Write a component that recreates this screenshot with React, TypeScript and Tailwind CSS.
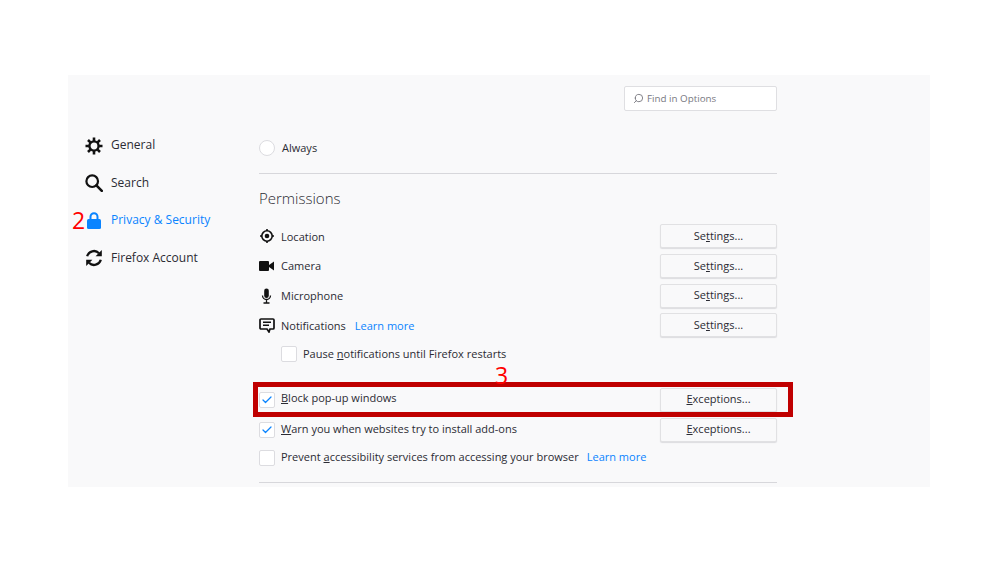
import { Check, Search } from "lucide-react";
import { ReactNode } from "react";

const font = { fontFamily: '"Open Sans", "Noto Sans", sans-serif' };

const NavItem = ({ icon, label, active }: { icon: ReactNode; label: string; active?: boolean }) => (
  <div className={`flex h-[37.5px] items-center gap-[8px] pl-[17px] text-[12px] ${active ? "text-[#0a84ff]" : "text-[#2b2b33]"}`}>
    <span className="flex w-[18px] justify-center">{icon}</span>
    <span className="mb-[1px]">{label}</span>
  </div>
);

const Btn = ({ children }: { children: ReactNode }) => (
  <button className="h-[24px] w-[117px] rounded-[2px] border border-[#e1e1e3] bg-[#f9f9fa] text-center text-[11px] text-[#2b2b33] shadow-[0_1px_1px_#dcdcdf]">
    {children}
  </button>
);

const Settings2 = () => (
  <Btn>
    Se<span className="underline">t</span>tings...
  </Btn>
);

const Exceptions = () => (
  <Btn>
    <span className="underline">E</span>xceptions...
  </Btn>
);

const CheckBox = ({ checked }: { checked?: boolean }) => (
  <span className="flex h-[16px] w-[16px] shrink-0 items-center justify-center rounded-[2px] border border-[#dcdce0] bg-white">
    {checked && <Check size={12} strokeWidth={2.5} className="text-[#0a84ff]" />}
  </span>
);

const PermRow = ({ icon, label, extra }: { icon: ReactNode; label: string; extra?: ReactNode }) => (
  <div className="flex h-[29.67px] items-center justify-between">
    <div className="flex items-center">
      <span className="flex w-[22px] justify-start">{icon}</span>
      <span className="mt-[1px] text-[11px] text-[#2b2b33]">{label}</span>
      {extra}
    </div>
    <Settings2 />
  </div>
);

const GearIcon = () => (
  <svg width="18" height="18" viewBox="0 0 18 18">
    <circle cx="9" cy="9" r="4.6" fill="none" stroke="#111" strokeWidth="2.4" />
    <path
      d="M9 .5v3.4M9 14.1v3.4M.5 9h3.4M14.1 9h3.4M3 3l2.4 2.4M12.6 12.6 15 15M15 3l-2.4 2.4M5.4 12.6 3 15"
      stroke="#111"
      strokeWidth="2.6"
    />
  </svg>
);

const SearchIcon = () => (
  <svg width="18" height="18" viewBox="0 0 18 18">
    <circle cx="7.2" cy="7.2" r="5.8" fill="none" stroke="#111" strokeWidth="2.2" />
    <path d="M11.4 11.4 16.8 16.8" stroke="#111" strokeWidth="2.6" strokeLinecap="round" />
  </svg>
);

const SyncIcon = () => (
  <svg width="18" height="18" viewBox="0 0 18 18">
    <path d="M2.2 7.2A7 7 0 0 1 14 4.2" fill="none" stroke="#111" strokeWidth="2.3" />
    <path d="M16.8 1v6.2h-6.2z" fill="#111" />
    <path d="M15.8 10.8A7 7 0 0 1 4 13.8" fill="none" stroke="#111" strokeWidth="2.3" />
    <path d="M1.2 17v-6.2h6.2z" fill="#111" />
  </svg>
);

const LocationIcon = () => (
  <svg width="16" height="16" viewBox="0 0 16 16">
    <circle cx="8" cy="8" r="5.2" fill="none" stroke="#111" strokeWidth="1.6" />
    <circle cx="8" cy="8" r="2.3" fill="#111" />
    <path d="M8 1v2M8 13v2M1 8h2M13 8h2" stroke="#111" strokeWidth="1.6" />
  </svg>
);

const VideoIcon = () => (
  <svg width="15" height="16" viewBox="0 0 15 16">
    <rect x="0" y="3" width="10" height="10" rx="1" fill="#111" />
    <path d="M10 7l5-3.5v9L10 9z" fill="#111" />
  </svg>
);

const MicIcon = () => (
  <svg width="15" height="16" viewBox="0 0 15 16">
    <rect x="5.2" y="0.5" width="4.6" height="9.5" rx="2.3" fill="#111" />
    <path d="M3.5 7.5a4 4 0 0 0 8 0M7.5 11.5v3M4.5 15h6" fill="none" stroke="#111" strokeWidth="1.3" />
  </svg>
);

const NotifIcon = () => (
  <svg width="16" height="16" viewBox="0 0 16 16">
    <path d="M2 2h12a1 1 0 0 1 1 1v8a1 1 0 0 1-1 1h-3l-1 3-2-3H2a1 1 0 0 1-1-1V3a1 1 0 0 1 1-1z" fill="none" stroke="#111" strokeWidth="1.7" />
    <path d="M4 5.2h8M4 8.2h6" stroke="#111" strokeWidth="1.4" />
  </svg>
);

const LockIcon = () => (
  <svg width="16" height="17" viewBox="0 0 16 17">
    <path d="M4.5 7V4.8a3.5 3.5 0 0 1 7 0V7" fill="none" stroke="#0a84ff" strokeWidth="2" />
    <rect x="1" y="7" width="14" height="10" rx="1.5" fill="#0a84ff" />
  </svg>
);

const App = () => {
  return (
    <div className="h-[562px] w-[999px] overflow-hidden bg-white pt-[75px]" style={font}>
      <div className="relative ml-[68px] flex h-[412px] w-[862px] bg-[#f9f9fa]">
        <aside className="w-[191px] shrink-0 pt-[52px]">
          <NavItem icon={<GearIcon />} label="General" />
          <NavItem icon={<SearchIcon />} label="Search" />
          <div className="relative">
            <NavItem active icon={<LockIcon />} label="Privacy & Security" />
            <span className="absolute left-[4px] top-[8px] text-[23px] leading-[20px] text-[#f00]">2</span>
          </div>
          <NavItem icon={<SyncIcon />} label="Firefox Account" />
        </aside>

        <main className="w-[518px] pt-[11px]">
          <div className="flex justify-end">
            <div className="flex h-[25px] w-[153px] items-center gap-[3px] rounded-[2px] border border-[#dfdfe2] bg-white pl-[8px] text-[9.8px] text-[#77777f]">
              <Search size={11} className="-scale-x-100" />
              <span className="mt-[1px]">Find in Options</span>
            </div>
          </div>

          <div className="mt-[25px] flex h-[24px] items-center gap-[7px] text-[11px] text-[#2b2b33]">
            <span className="h-[16px] w-[16px] rounded-full border border-[#dcdce0] bg-white" />
            <span>Always</span>
          </div>

          <div className="mt-[13px] border-t border-[#d7d7db]" />

          <h2 className="mt-[11px] h-[27px] text-[15px] font-light leading-[27px] text-[#2b2b33]">Permissions</h2>

          <div className="mt-[9.5px]">
            <PermRow icon={<LocationIcon />} label="Location" />
            <PermRow icon={<VideoIcon />} label="Camera" />
            <PermRow icon={<MicIcon />} label="Microphone" />
            <PermRow
              icon={<NotifIcon />}
              label="Notifications"
              extra={<span className="ml-[9px] mt-[1px] text-[11px] text-[#0a84ff]">Learn more</span>}
            />
          </div>

          <div className="ml-[22px] mt-[0.5px] flex h-[27px] items-center gap-[6px] text-[11px] text-[#2b2b33]">
            <CheckBox />
            <span>
              Pause <span className="underline">n</span>otifications until Firefox restarts
            </span>
          </div>

          <div className="mt-[20px] flex h-[24px] items-center justify-between">
            <div className="flex items-center gap-[6px] text-[11px] text-[#2b2b33]">
              <CheckBox checked />
              <span className="mb-[2px]">
                <span className="underline">B</span>lock pop-up windows
              </span>
            </div>
            <Exceptions />
          </div>

          <div className="mt-[6px] flex h-[24px] items-center justify-between">
            <div className="flex items-center gap-[6px] text-[11px] text-[#2b2b33]">
              <CheckBox checked />
              <span>
                <span className="underline">W</span>arn you when websites try to install add-ons
              </span>
            </div>
            <Exceptions />
          </div>

          <div className="mt-[4px] flex h-[24px] items-center gap-[6px] text-[11px] text-[#2b2b33]">
            <CheckBox />
            <span>
              Prevent <span className="underline">a</span>ccessibility services from accessing your browser
            </span>
            <span className="ml-[2px] text-[#0a84ff]">Learn more</span>
          </div>

          <div className="mt-[12px] border-t border-[#d7d7db]" />
        </main>

        <div className="absolute left-[185px] top-[307px] h-[35px] w-[540px] border-[5px] border-[#c00000]" />
        <span className="absolute left-[427px] top-[291px] text-[23px] leading-[18px] text-[#f00]">3</span>
      </div>
    </div>
  );
};

export default App;
